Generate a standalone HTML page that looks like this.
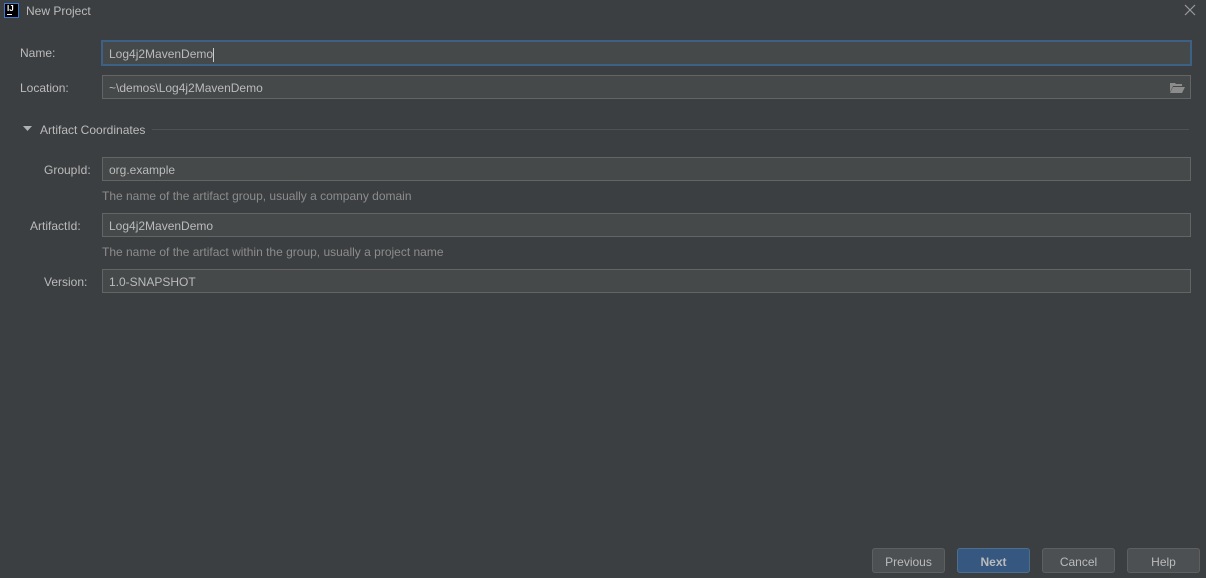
<!DOCTYPE html>
<html><head><style>
body{margin:0;width:1206px;height:578px;background:#3c3f41;font-family:"Liberation Sans",sans-serif;font-size:12px;color:#bbbbbb;position:relative;overflow:hidden}
.a{position:absolute}
.in{position:absolute;background:#45494a;border:1px solid #646464;box-sizing:border-box;height:24px;line-height:24px;padding-left:6px;color:#bbbbbb}
.lbl{position:absolute;line-height:16px}
.hint{position:absolute;color:#8c8c8c;line-height:16px}
.btn{position:absolute;top:548px;width:73px;height:25px;box-sizing:border-box;border:1px solid #5e6060;border-radius:3px;background:#4c5052;text-align:center;line-height:26px;color:#bbbbbb}
</style></head><body>
<div class="a" style="left:4px;top:3px;width:15px;height:15px;background:#000;border:1px solid #3a7bd5;box-sizing:border-box"></div>
<div class="a" style="left:7px;top:5px;color:#fff;font-size:8px;font-weight:bold;line-height:8px">IJ</div>
<div class="a" style="left:7px;top:14px;width:5px;height:1px;background:#fff"></div>
<div class="a" style="left:26px;top:3px;line-height:16px;font-size:12px">New Project</div>
<svg class="a" style="left:1184px;top:4px" width="12" height="12"><path d="M1 1L11 11M11 1L1 11" stroke="#9a9a9a" stroke-width="1.2"/></svg>

<div class="lbl" style="left:20px;top:45px">Name:</div>
<div class="in" style="left:101px;top:40px;width:1091px;height:26px;border:2px solid #3d6185;line-height:24px;padding-left:6px">Log4j2MavenDemo<span style="display:inline-block;width:1px;height:14px;background:#ccc;vertical-align:middle"></span></div>
<div class="lbl" style="left:20px;top:80px">Location:</div>
<div class="in" style="left:102px;top:75px;width:1089px">~\demos\Log4j2MavenDemo</div>
<svg class="a" style="left:1170px;top:82px" width="15" height="11"><path d="M0 1h5l1 1h6v2H3L0 10z" fill="#8c8c8c"/><path d="M3 5h12l-3 6H0z" fill="#8c8c8c"/></svg>

<svg class="a" style="left:23px;top:126px" width="10" height="6"><path d="M0 0h9L4.5 5z" fill="#afb1b3"/></svg>
<div class="lbl" style="left:40px;top:122px">Artifact Coordinates</div>
<div class="a" style="left:152px;top:129px;width:1037px;height:1px;background:#515151"></div>

<div class="lbl" style="left:44px;top:162px">GroupId:</div>
<div class="in" style="left:102px;top:157px;width:1089px">org.example</div>
<div class="hint" style="left:102px;top:188px">The name of the artifact group, usually a company domain</div>
<div class="lbl" style="left:30px;top:218px">ArtifactId:</div>
<div class="in" style="left:102px;top:213px;width:1089px">Log4j2MavenDemo</div>
<div class="hint" style="left:102px;top:244px">The name of the artifact within the group, usually a project name</div>
<div class="lbl" style="left:44px;top:274px">Version:</div>
<div class="in" style="left:102px;top:269px;width:1089px">1.0-SNAPSHOT</div>

<div class="btn" style="left:872px">Previous</div>
<div class="btn" style="left:957px;background:#365880;border-color:#4c708c;color:#bbbbbb;font-weight:bold">Next</div>
<div class="btn" style="left:1042px">Cancel</div>
<div class="btn" style="left:1127px">Help</div>
</body></html>
